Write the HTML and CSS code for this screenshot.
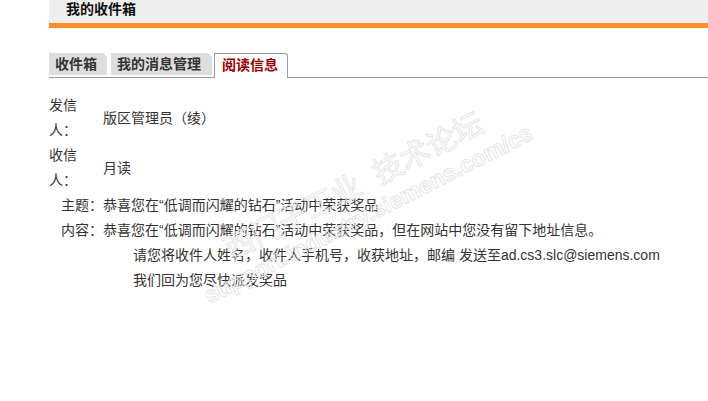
FILE: index.html
```html
<!DOCTYPE html>
<html lang="zh-CN">
<head>
  <meta charset="UTF-8" />
  <title>我的收件箱</title>
  <link rel="stylesheet" href="styles.css">
</head>
<body>
  <div class="page">
    <div class="title-bar">我的收件箱</div>

    <ul class="tabs">
      <li class="tab">收件箱</li>
      <li class="tab tab-wide">我的消息管理</li>
      <li class="tab active">阅读信息</li>
    </ul>

    <div class="message">
      <div class="label wrap">发信人：</div>
      <div class="value">版区管理员（绫）</div>

      <div class="label wrap">收信人：</div>
      <div class="value">月读</div>

      <div class="label">主题：</div>
      <div class="value">恭喜您在“低调而闪耀的钻石”活动中荣获奖品</div>

      <div class="label">内容：</div>
      <div class="value">
        恭喜您在“低调而闪耀的钻石”活动中荣获奖品，但在网站中您没有留下地址信息。
        <p class="indent">请您将收件人姓名，收件人手机号，收获地址，邮编 发送至ad.cs3.slc@siemens.com</p>
        <p class="indent">我们回为您尽快派发奖品</p>
      </div>
    </div>

    <!-- forum watermark -->
    <div class="watermark">
      <div class="wm-cn">西门子工业&nbsp;&nbsp;技术论坛</div>
      <div class="wm-url">support.industry.siemens.com/cs</div>
    </div>
  </div>
</body>
</html>
```

FILE: styles.css
```css
body {
  margin: 0;
  padding: 0;
  font-family: "Liberation Sans", "Noto Sans CJK SC", sans-serif;
  font-size: 14px;
  color: #333;
  background: #fff;
}

.page {
  position: relative;
  padding-left: 49px;
  height: 401px;
  overflow: hidden;
}

.title-bar {
  height: 23px;
  line-height: 19px;
  padding-left: 17px;
  background-color: #eeeeee;
  border-bottom: 5px solid #ff8c2e;
  font-weight: bold;
  color: #111;
}

.tabs {
  display: flex;
  align-items: flex-end;
  list-style: none;
  margin: 25px 0 0 0;
  padding: 0;
  height: 24px;
  border-bottom: 1px solid #9a9a9a;
}

.tab {
  box-sizing: border-box;
  width: 58px;
  height: 22px;
  margin-bottom: 2px;
  padding-left: 6px;
  line-height: 22px;
  font-weight: bold;
  color: #333;
  background-color: #dedede;
  clip-path: polygon(0 0, calc(100% - 4px) 0, 100% 4px, 100% 100%, 0 100%);
}

.tab-wide {
  width: 101px;
  margin-left: 4px;
}

.tab.active {
  width: 74px;
  height: 25px;
  margin-left: 2px;
  margin-bottom: -1px;
  padding-left: 7px;
  line-height: 23px;
  color: #990000;
  background-color: #fff;
  border: 1px solid #9a9a9a;
  border-bottom: none;
  border-top-right-radius: 3px;
  clip-path: none;
}

.message {
  display: grid;
  grid-template-columns: 54px 1fr;
  align-items: center;
  margin-top: 15px;
  line-height: 25px;
}

.label {
  text-align: right;
  align-self: start;
}

.label.wrap {
  width: 36px;
  text-align: left;
}

.value p {
  margin: 0;
}

.indent {
  padding-left: 30px;
}

.watermark {
  position: absolute;
  left: 165px;
  top: 167px;
  width: 390px;
  text-align: center;
  transform: rotate(-27deg);
  color: transparent;
  -webkit-text-stroke: 1px #e6e6e6;
  pointer-events: none;
}

.wm-cn {
  font-size: 30px;
  line-height: 36px;
}

.wm-url {
  font-size: 23px;
  line-height: 26px;
  font-weight: bold;
}
```
